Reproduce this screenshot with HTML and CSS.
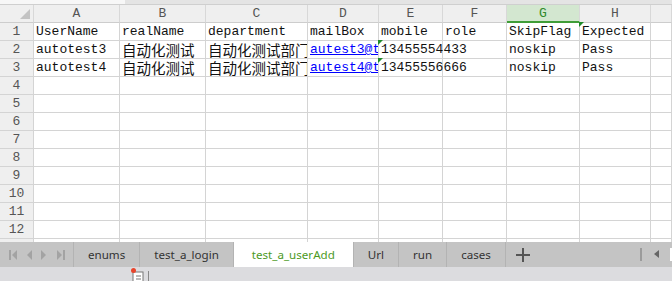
FILE: index.html
```html
<!DOCTYPE html>
<html lang="en">
<head>
    <meta charset="UTF-8">
    <title>Sheet</title>
    <link rel="stylesheet" href="styles.css">
</head>
<body>

    <div class="topstrip"><div class="topstrip-left"></div></div>

    <div class="sheet">
        <div class="row head">
            <div class="cell corner"><span class="corner-mark"></span></div>
            <div class="cell">A</div>
            <div class="cell">B</div>
            <div class="cell">C</div>
            <div class="cell">D</div>
            <div class="cell">E</div>
            <div class="cell">F</div>
            <div class="cell selected">G</div>
            <div class="cell">H</div>
            <div class="cell"></div>
        </div>
        <div class="row">
            <div class="cell num">1</div>
            <div class="cell">UserName</div>
            <div class="cell">realName</div>
            <div class="cell clip">department</div>
            <div class="cell clip">mailBox</div>
            <div class="cell">mobile</div>
            <div class="cell">role</div>
            <div class="cell">SkipFlag</div>
            <div class="cell flag">Expected</div>
            <div class="cell"></div>
        </div>
        <div class="row">
            <div class="cell num">2</div>
            <div class="cell">autotest3</div>
            <div class="cell clip"><span class="cjk">自动化测试</span></div>
            <div class="cell clip"><span class="cjk">自动化测试部门</span></div>
            <div class="cell clip"><a class="mail" href="#">autest3@test.com</a></div>
            <div class="cell flag">13455554433</div>
            <div class="cell"></div>
            <div class="cell">noskip</div>
            <div class="cell">Pass</div>
            <div class="cell"></div>
        </div>
        <div class="row">
            <div class="cell num">3</div>
            <div class="cell">autotest4</div>
            <div class="cell clip"><span class="cjk">自动化测试</span></div>
            <div class="cell clip"><span class="cjk">自动化测试部门</span></div>
            <div class="cell clip"><a class="mail" href="#">autest4@test.com</a></div>
            <div class="cell flag">13455556666</div>
            <div class="cell"></div>
            <div class="cell">noskip</div>
            <div class="cell">Pass</div>
            <div class="cell"></div>
        </div>
        <div id="empty-rows"></div>
    </div>

    <div class="tabbar">
        <div class="tabnav">
            <svg width="74" height="25" viewBox="0 0 74 25">
                <g fill="#a3a3a3">
                    <rect x="9" y="8" width="2" height="10"/>
                    <polygon points="17,8 17,18 12,13"/>
                    <polygon points="32,8 32,18 27,13"/>
                    <polygon points="41,8 41,18 46,13"/>
                    <polygon points="57,8 57,18 62,13"/>
                    <rect x="63" y="8" width="2" height="10"/>
                </g>
            </svg>
        </div>
        <div class="tab">enums</div>
        <div class="tab">test_a_login</div>
        <div class="tab active">test_a_userAdd</div>
        <div class="tab">Url</div>
        <div class="tab">run</div>
        <div class="tab">cases</div>
        <div class="tab-add">
            <svg width="14" height="14" viewBox="0 0 14 14">
                <rect x="0" y="6" width="14" height="2" fill="#555"/>
                <rect x="6" y="0" width="2" height="14" fill="#555"/>
            </svg>
        </div>
        <div class="tab-scroll">
            <svg width="32" height="25" viewBox="0 0 32 25">
                <rect x="0" y="6" width="2" height="13" fill="#9b9b9b"/>
                <polygon points="19,8 19,16 14,12" fill="#666"/>
                <rect x="30" y="6" width="2" height="13" fill="#fff"/>
            </svg>
        </div>
    </div>

    <div class="statusbar">
        <svg class="status-icon" width="20" height="14" viewBox="0 0 20 14">
            <rect x="2" y="4" width="10" height="10" fill="#fff" stroke="#777"/>
            <line x1="5" y1="8" x2="10" y2="8" stroke="#777"/>
            <line x1="5" y1="11" x2="10" y2="11" stroke="#777"/>
            <circle cx="2.5" cy="2.5" r="2.5" fill="#e8452c"/>
            <rect x="17" y="3" width="1" height="11" fill="#888"/>
        </svg>
    </div>

    <script>
        // Fill the empty rows 4 - 13
        const holder = document.getElementById("empty-rows");
        for (let r = 4; r <= 13; r++) {
            const row = document.createElement("div");
            row.className = "row";
            let html = `<div class="cell num">${r}</div>`;
            for (let c = 0; c < 9; c++) {
                html += `<div class="cell"></div>`;
            }
            row.innerHTML = html;
            holder.appendChild(row);
        }
    </script>

</body>
</html>
```

FILE: styles.css
```css
/* General */
body {
    margin: 0;
    padding: 0;
    width: 672px;
    height: 281px;
    overflow: hidden;
    background: #fff;
    font-family: "Liberation Mono", monospace;
}

/* Thin strip above the grid */
.topstrip {
    height: 4px;
    background: #e4e4e4;
    border-bottom: 1px solid #cfcfcf;
}
.topstrip-left {
    width: 125px;
    height: 4px;
    background: #f7f7f7;
}

/* Grid */
.sheet {
    height: 237px;
    overflow: hidden;
}
.row {
    display: grid;
    grid-template-columns: 34px 86px 86px 102px 71px 64px 64px 73px 71px 1fr;
    height: 18px;
}
.cell {
    box-sizing: border-box;
    height: 18px;
    border-right: 1px solid #d4d4d4;
    border-bottom: 1px solid #d4d4d4;
    padding-left: 2px;
    font-size: 13px;
    line-height: 18px;
    color: #111;
    white-space: nowrap;
    position: relative;
}
.clip {
    overflow: hidden;
}
.cjk {
    font-family: "Noto Sans CJK SC", sans-serif;
    font-size: 14.5px;
    line-height: 17px;
}
.mail {
    color: #0000ff;
    text-decoration: underline;
}

/* Column and row headers */
.head .cell {
    background: #efefef;
    color: #555;
    text-align: center;
    padding-left: 0;
    border-right-color: #d8d8d8;
    border-bottom-color: #cdcdcd;
}
.head .selected {
    background: #d3e7d0;
    color: #2f8a2a;
    border-bottom: 2px solid #3f9d37;
    line-height: 17px;
}
.corner-mark {
    position: absolute;
    right: 3px;
    bottom: 3px;
    width: 0;
    height: 0;
    border-left: 10px solid transparent;
    border-bottom: 10px solid #c3c3c3;
}
.num {
    background: #efefef;
    color: #555;
    text-align: center;
    padding-left: 0;
}

/* Green "number stored as text" marker */
.flag::before {
    content: "";
    position: absolute;
    left: -1px;
    top: -1px;
    width: 0;
    height: 0;
    border-top: 5px solid #1f8a2a;
    border-right: 5px solid transparent;
}

/* Sheet tabs */
.tabbar {
    display: flex;
    height: 25px;
    background: #c4c4c4;
    font-family: "Noto Sans", sans-serif;
    font-size: 11.6px;
    color: #333;
}
.tabnav {
    width: 74px;
    border-right: 1px solid #b3b3b3;
    box-sizing: border-box;
}
.tab {
    padding: 0 14px;
    line-height: 25px;
    border-right: 1px solid #b3b3b3;
}
.tab.active {
    background: #fff;
    color: #4c9a1f;
    padding: 0 18px;
}
.tab-add {
    display: flex;
    align-items: center;
    padding-left: 10px;
}
.tab-scroll {
    margin-left: auto;
}

/* Status bar */
.statusbar {
    height: 14px;
    background: #dcdcdf;
    overflow: hidden;
}
.status-icon {
    display: block;
    margin-left: 131px;
    margin-top: 1px;
}
```
